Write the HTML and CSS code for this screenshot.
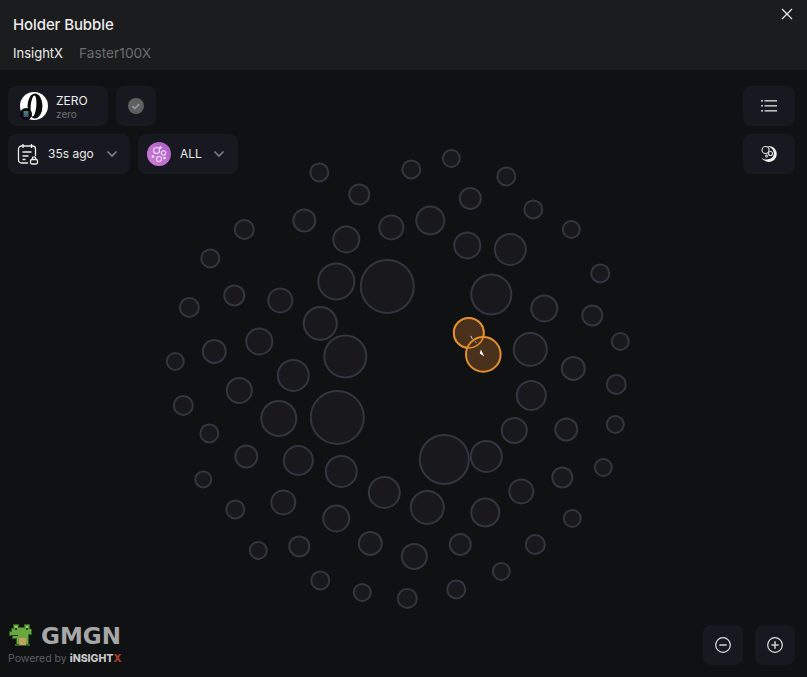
FILE: index.html
```html
<!DOCTYPE html>
<html lang="en">
<head>
<meta charset="utf-8">
<title>Holder Bubble</title>
<link rel="stylesheet" href="styles.css">
</head>
<body>
<div class="panel">
  <header class="head">
    <div class="title">Holder Bubble</div>
    <nav class="tabs"><span class="tab on">InsightX</span><span class="tab">Faster100X</span></nav>
    <svg class="close" viewBox="0 0 12 12" width="12" height="12"><path d="M1 1l10 10M11 1L1 11" stroke="#e8e8e8" stroke-width="1.3" fill="none"/></svg>
  </header>
  <main class="stage">
    <svg class="bubbles" viewBox="-0.3 69.6 807 607" width="807" height="607">
      <g class="b">
        <circle cx="319" cy="172" r="9"/><circle cx="411" cy="169" r="9"/><circle cx="451" cy="158" r="8.5"/><circle cx="506" cy="176" r="9"/>
        <circle cx="359" cy="194" r="10"/><circle cx="470" cy="198" r="10.5"/><circle cx="533" cy="209" r="9"/><circle cx="571" cy="229" r="8.5"/>
        <circle cx="304" cy="220" r="11"/><circle cx="244" cy="229" r="9.5"/><circle cx="430" cy="220" r="14"/><circle cx="391" cy="227" r="12"/>
        <circle cx="346" cy="239" r="13"/><circle cx="467" cy="245" r="13"/><circle cx="510" cy="249" r="15.5"/><circle cx="210" cy="258" r="9"/>
        <circle cx="600" cy="273" r="9"/><circle cx="387" cy="286" r="26.5"/><circle cx="336" cy="281" r="18"/><circle cx="491" cy="294" r="20"/>
        <circle cx="234" cy="295" r="10"/><circle cx="280" cy="300" r="12"/><circle cx="189" cy="307" r="9.5"/><circle cx="544" cy="308" r="13"/>
        <circle cx="592" cy="315" r="10"/><circle cx="320" cy="323" r="16.5"/><circle cx="620" cy="341" r="8.5"/><circle cx="259" cy="341" r="13"/>
        <circle cx="214" cy="351" r="11.5"/><circle cx="345" cy="356" r="21"/><circle cx="530" cy="349" r="16.5"/><circle cx="175" cy="361" r="8.5"/>
        <circle cx="573" cy="368" r="11.5"/><circle cx="293" cy="375" r="15.5"/><circle cx="616" cy="384" r="9.5"/><circle cx="239" cy="390" r="12.5"/>
        <circle cx="531" cy="395" r="14.5"/><circle cx="183" cy="405" r="9.5"/><circle cx="337" cy="417" r="26.5"/><circle cx="278.5" cy="418" r="17.5"/>
        <circle cx="514" cy="430" r="12.5"/><circle cx="566" cy="429" r="11"/><circle cx="615" cy="424" r="8.5"/><circle cx="209" cy="433" r="9"/>
        <circle cx="444" cy="459" r="24.5"/><circle cx="486" cy="456" r="15.5"/><circle cx="246" cy="456" r="11"/><circle cx="298" cy="460" r="14.5"/>
        <circle cx="341" cy="471" r="15.5"/><circle cx="603" cy="467" r="8.5"/><circle cx="203" cy="479" r="8"/><circle cx="562" cy="477" r="10"/>
        <circle cx="384" cy="492" r="15.5"/><circle cx="521" cy="491" r="12"/><circle cx="283" cy="502" r="12"/><circle cx="427" cy="507" r="16.5"/>
        <circle cx="485" cy="512" r="14"/><circle cx="235" cy="509" r="9"/><circle cx="336" cy="518" r="13"/><circle cx="572" cy="518" r="8.5"/>
        <circle cx="299" cy="546" r="10"/><circle cx="370" cy="543" r="11.5"/><circle cx="460" cy="544" r="10.5"/><circle cx="535" cy="544" r="9.5"/>
        <circle cx="258" cy="550" r="8.5"/><circle cx="414" cy="556" r="12.5"/><circle cx="501" cy="571" r="8.5"/><circle cx="320" cy="580" r="9"/>
        <circle cx="456" cy="589" r="9"/><circle cx="362" cy="592" r="8.5"/><circle cx="407" cy="598" r="9.5"/>
      </g>
      <g class="o">
        <circle cx="468.5" cy="332.5" r="15"/><circle cx="483" cy="354" r="17.3"/>
      </g>
      <g class="o-ring">
        <circle cx="468.5" cy="332.5" r="15"/>
      </g>
      <path d="M470.5 335.5l1.5 3" stroke="#d8d8d8" stroke-width="1" fill="none"/>
      <path d="M475 341l1 1.5" stroke="#b8b8b8" stroke-width="1" fill="none"/>
      <path d="M480.5 349l3.5 7-4.5-3z" fill="#fff"/>
    </svg>

    <div class="bar">
      <div class="col">
        <div class="row">
          <div class="chip token">
            <svg class="logo" viewBox="0 0 28 28" width="28" height="28">
              <circle cx="14" cy="14" r="14" fill="#fff"/>
              <ellipse cx="15" cy="14" rx="7.5" ry="12.5" fill="#0c0c0c"/>
              <ellipse cx="13.5" cy="14" rx="2.8" ry="10.5" fill="#fff" transform="rotate(5 13.5 14)"/>
              <circle cx="6" cy="22" r="6" fill="#0a0a0c"/>
              <path d="M3.5 20h5" stroke="#4fb8a0" stroke-width="1.4"/>
              <path d="M3.5 22h5" stroke="#5f9aa8" stroke-width="1.4"/>
              <path d="M3.5 24h5" stroke="#7a62b8" stroke-width="1.4"/>
            </svg>
            <div class="names"><span class="sym">ZERO</span><span class="nm">zero</span></div>
          </div>
          <div class="chip square">
            <svg viewBox="0 0 16 16" width="16" height="16"><circle cx="8" cy="8" r="8" fill="#5e5f60"/><path d="M4.5 8.2l2.4 2.3 4.4-4.4" stroke="#9a9b9c" stroke-width="1.6" fill="none"/></svg>
          </div>
        </div>
        <div class="row">
          <div class="chip time">
            <svg viewBox="0 0 22 22" width="22" height="22" fill="none" stroke="#ececec" stroke-width="1.3">
              <path d="M11 20H4.500a3 3 0 0 1-3-3V6a3 3 0 0 1 3-3h11a3 3 0 0 1 3 3v7"/>
              <path d="M6 1v4M14.500 1v4M5.500 9h9M5.500 13h6M5.500 16.500h3"/>
              <rect x="13.500" y="16.500" width="7" height="4.500" rx="1.500"/>
              <path d="M15.300 16.500v-1a1.700 1.700 0 0 1 3.400 0v1"/>
            </svg>
            <span class="val">35s ago</span>
            <svg class="caret" viewBox="0 0 12 8" width="12" height="8"><path d="M1.500 1.500L6 6l4.500-4.500" stroke="#7f8086" stroke-width="1.6" fill="none"/></svg>
          </div>
          <div class="chip all">
            <svg viewBox="0 0 24 24" width="24" height="24" fill="none" stroke="#f6e4fa" stroke-width="1.1">
              <defs><linearGradient id="allGrad" x1="1" y1="0" x2="0" y2="1"><stop offset="0" stop-color="#a95cc4"/><stop offset="1" stop-color="#d07fda"/></linearGradient></defs>
              <circle cx="12" cy="12" r="12" fill="url(#allGrad)" stroke="none"/>
              <circle cx="9.500" cy="8.500" r="3"/><circle cx="16.500" cy="11" r="2.200"/><circle cx="12" cy="17" r="2.500"/><circle cx="13.500" cy="5.500" r=".8"/><circle cx="6" cy="14.500" r=".8"/><circle cx="17.500" cy="16" r=".8"/>
            </svg>
            <span class="val wide">ALL</span>
            <svg class="caret" viewBox="0 0 12 8" width="12" height="8"><path d="M1.500 1.500L6 6l4.500-4.500" stroke="#7f8086" stroke-width="1.6" fill="none"/></svg>
          </div>
        </div>
      </div>
      <div class="col">
        <div class="chip tool">
          <svg viewBox="0 0 16 12" width="16" height="12" fill="#bcbcbe"><rect x="0" y="0" width="2" height="1.600"/><rect x="3.500" y="0" width="12.500" height="1.600"/><rect x="0" y="5" width="2" height="1.600"/><rect x="3.500" y="5" width="12.500" height="1.600"/><rect x="0" y="10" width="2" height="1.600"/><rect x="3.500" y="10" width="12.500" height="1.600"/></svg>
        </div>
        <div class="chip tool">
          <svg viewBox="0 0 18 18" width="18" height="18" fill="none" stroke="#dcdcdc" stroke-width="1.1">
            <path d="M7 1.200A8 8 0 1 1 1.800 13C5 15.500 13 15 13.800 9 14.200 5.500 11 1.600 7 1.200z" fill="#f0f0f0" stroke="none"/>
            <circle cx="5.500" cy="5" r="3.500"/>
            <circle cx="10.500" cy="8.500" r="2"/>
            <circle cx="6.500" cy="11" r="1.700" fill="#a8a8a8" stroke="none"/>
          </svg>
        </div>
      </div>
    </div>

    <footer class="foot">
      <div class="brand">
        <div class="mark">
          <svg class="frog" viewBox="0 0 26 26" width="26" height="26" shape-rendering="crispEdges">
            <path fill="#2f6224" d="M5 1h6v3h5V1h6v5h2v6h-3v9h1v2H7v-2h1v-5H4v-3H1V8h2V5h2z"/>
            <path fill="#6aa83f" d="M6 2h4v3h7V2h4v4h2v5h-3v10H9v-6H5v-3H2V9h2V6h2z"/>
            <path fill="#9bd05c" d="M7 3h2v2H7zM18 3h2v2h-2z"/>
            <path fill="#1f3f18" d="M7 5h2v2H7zM18 5h2v2h-2zM3 12h7v1H3z"/>
            <path fill="#c2a062" d="M11 15h7v7h-7z"/>
          </svg>
          <span class="gmgn">GMGN</span>
        </div>
        <div class="power">Powered by <b class="ix">iNSIGHT<i class="x">X</i></b></div>
      </div>
      <div class="zoom">
        <div class="chip zbtn">
          <svg viewBox="0 0 16 16" width="16" height="16" fill="none" stroke="#e0e0e0"><circle cx="8" cy="8" r="7.3" stroke-width="1.2"/><path d="M4.3 8h7.4" stroke-width="1.6" stroke="#c8c8c8"/></svg>
        </div>
        <div class="chip zbtn">
          <svg viewBox="0 0 16 16" width="16" height="16" fill="none" stroke="#e0e0e0"><circle cx="8" cy="8" r="7.3" stroke-width="1.2"/><path d="M4.3 8h7.4M8 4.3v7.4" stroke-width="1.6" stroke="#c8c8c8"/></svg>
        </div>
      </div>
    </footer>
  </main>
</div>
</body>
</html>
```
FILE: styles.css
```css
* { box-sizing: border-box; }
html, body { margin: 0; height: 100%; background: #101113; overflow: hidden; }
body { font-family: Inter, "Liberation Sans", sans-serif; color: #f2f2f2; }
.panel { width: 807px; height: 677px; display: flex; flex-direction: column; }
.head { position: relative; height: 70px; flex: none; background: #1b1c1e; padding: 15px 13px 0; }
.title { font-size: 15px; line-height: 19px; font-weight: 450; letter-spacing: -.1px; color: #ececec; }
.tabs { display: flex; gap: 16px; margin-top: 10px; font-size: 13.75px; line-height: 18px; }
.tab { color: #6b6d70; }
.tab.on { color: #ececec; font-size: 13px; }
.close { position: absolute; top: 8px; right: 14px; }
.stage { position: relative; flex: 1; display: flex; flex-direction: column; justify-content: space-between; padding: 16px 12px 12px 8px; }
.bubbles { position: absolute; left: 0; top: 0; }
.b circle { fill: #18181d; stroke: #33353f; stroke-width: 2; }
.o circle { fill: #4a311c; stroke: #e38d2e; stroke-width: 2; }
.o-ring circle { fill: none; stroke: #e38d2e; stroke-width: 1.5; }
.bar, .foot { position: relative; display: flex; justify-content: space-between; }
.foot { align-items: flex-end; }
.col { display: flex; flex-direction: column; gap: 8px; }
.row { display: flex; gap: 8px; }
.chip { display: flex; align-items: center; height: 40px; background: #181920; border-radius: 8px; }
.token { width: 100px; padding-left: 12px; gap: 8px; }
.names { display: flex; flex-direction: column; padding-top: 2px; }
.sym { font-size: 12px; line-height: 14px; color: #ececec; }
.nm { font-size: 10px; line-height: 13px; color: #6e7078; }
.square { width: 40px; justify-content: center; }
.time { width: 122px; padding-left: 9px; }
.all { width: 100px; padding-left: 9px; }
.val { font-size: 12px; line-height: 14px; margin-left: 9px; width: 58px; color: #e8e8e8; }
.val.wide { width: 33px; }
.tool { width: 52px; justify-content: center; }
.brand { margin-bottom: -1px; }
.mark { display: flex; align-items: center; gap: 7px; height: 28px; }
.frog { flex: none; }
.gmgn { font-family: "DejaVu Sans", sans-serif; font-weight: 700; font-size: 23px; color: #a6a7a7; line-height: 28px; }
.power { font-size: 10.5px; line-height: 14px; margin-top: 2px; color: #5e6068; }
.ix { font-weight: 800; color: #c8c8c8; font-size: 10.5px; }
.x { font-style: normal; color: #a8402f; }
.zoom { display: flex; gap: 12px; }
.zbtn { width: 40px; justify-content: center; }
```
